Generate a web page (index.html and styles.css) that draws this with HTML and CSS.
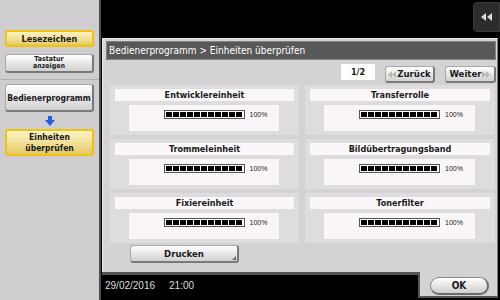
FILE: index.html
```html
<!DOCTYPE html>
<html lang="de">

<head>
    <meta charset="UTF-8">
    <meta name="viewport" content="width=device-width, initial-scale=1.0">
    <title>Einheiten überprüfen</title>
    <link rel="stylesheet" href="styles.css">
</head>

<body>
    <div class="screen">
        <aside class="sidebar">
            <div class="side-top">
                <button class="btn btn-yellow bookmark">Lesezeichen</button>
                <button class="btn btn-gray keyboard">Tastatur<br>anzeigen</button>
            </div>
            <div class="side-nav">
                <button class="btn btn-gray crumb">Bedienerprogramm</button>
                <svg class="down-arrow" width="10" height="10" viewBox="0 0 10 10">
                    <path d="M3 0 H7 V4 H10 L5 10 L0 4 H3 Z" fill="#1f5fe6" />
                </svg>
                <button class="btn btn-yellow crumb two-lines">Einheiten<br>überprüfen</button>
            </div>
        </aside>

        <main class="main">
            <div class="topbar">
                <button class="back">
                    <svg width="11" height="8" viewBox="0 0 11 8">
                        <path d="M5 0 L0 4 L5 8 Z M11 0 L6 4 L11 8 Z" fill="#dcdcdc" />
                    </svg>
                </button>
            </div>

            <section class="panel">
                <div class="panel-title">Bedienerprogramm &gt; Einheiten überprüfen</div>

                <div class="pager">
                    <div class="page-no">1/2</div>
                    <button class="btn btn-gray nav-btn">
                        <svg width="8" height="7" viewBox="0 0 8 7">
                            <path d="M4 0 L0 3.5 L4 7 Z M8 0 L4 3.5 L8 7 Z" fill="#b4b4b4" />
                        </svg>Zurück
                    </button>
                    <button class="btn btn-gray nav-btn">Weiter<svg width="8" height="7" viewBox="0 0 8 7">
                            <path d="M0 0 L4 3.5 L0 7 Z M4 0 L8 3.5 L4 7 Z" fill="#b4b4b4" />
                        </svg>
                    </button>
                </div>

                <div class="units">
                    <div class="unit">
                        <div class="unit-name">Entwicklereinheit</div>
                        <div class="unit-level"><span class="bar"></span><span class="pct">100%</span></div>
                    </div>
                    <div class="unit">
                        <div class="unit-name">Transferrolle</div>
                        <div class="unit-level"><span class="bar"></span><span class="pct">100%</span></div>
                    </div>
                    <div class="unit">
                        <div class="unit-name">Trommeleinheit</div>
                        <div class="unit-level"><span class="bar"></span><span class="pct">100%</span></div>
                    </div>
                    <div class="unit">
                        <div class="unit-name">Bildübertragungsband</div>
                        <div class="unit-level"><span class="bar"></span><span class="pct">100%</span></div>
                    </div>
                    <div class="unit">
                        <div class="unit-name">Fixiereinheit</div>
                        <div class="unit-level"><span class="bar"></span><span class="pct">100%</span></div>
                    </div>
                    <div class="unit">
                        <div class="unit-name">Tonerfilter</div>
                        <div class="unit-level"><span class="bar"></span><span class="pct">100%</span></div>
                    </div>
                </div>

                <div class="actions">
                    <button class="btn btn-gray print">Drucken</button>
                </div>
            </section>

            <footer class="footer">
                <div class="clock"><span>29/02/2016</span><span>21:00</span></div>
                <div class="ok-cell">
                    <button class="ok">OK</button>
                </div>
            </footer>
        </main>
    </div>
</body>

</html>
```

FILE: styles.css
```css
* {
    box-sizing: border-box;
}

body {
    margin: 0;
    background: #000;
    font-family: "DejaVu Sans", sans-serif;
    font-stretch: condensed;
    color: #1a1a1a;
}

.screen {
    display: flex;
    width: 500px;
    height: 300px;
    overflow: hidden;
}

button {
    font: inherit;
    font-stretch: condensed;
    color: inherit;
    padding: 0;
    cursor: pointer;
}

/* Botones generales */
.btn {
    display: flex;
    align-items: center;
    justify-content: center;
    text-align: center;
    border-radius: 3px;
    font-weight: bold;
    font-size: 9px;
    line-height: 10px;
}

.btn-gray {
    background: linear-gradient(#ffffff, #e4e3e4 60%, #d2d1d2);
    border: 1px solid #a8a8a8;
    border-right: 2px solid #7a7a7a;
    border-bottom: 2px solid #7a7a7a;
}

.btn-yellow {
    background: linear-gradient(#fbf3c4, #efdd8e 60%, #e2c966);
    border: 2px solid #f1c40a;
}

/* Barra lateral */
.sidebar {
    width: 101px;
    flex-shrink: 0;
    background: #cfcdd0;
    border-right: 2px solid #4e4e4e;
    display: flex;
    flex-direction: column;
}

.side-top {
    height: 80px;
    padding: 30px 5px 0;
    border-bottom: 1px solid #b2b0b3;
    display: flex;
    flex-direction: column;
    gap: 7px;
}

.bookmark {
    height: 17px;
    font-size: 9px;
}

.keyboard {
    height: 19px;
    font-size: 7px;
    line-height: 7px;
}

.side-nav {
    padding: 4px 5px 0;
    display: flex;
    flex-direction: column;
    align-items: center;
}

.crumb {
    width: 100%;
    height: 28px;
    font-size: 8.5px;
}

.two-lines {
    height: 27px;
    line-height: 11px;
}

.down-arrow {
    margin: 4px 0 3px;
}

/* Zona principal */
.main {
    flex: 1;
    display: flex;
    flex-direction: column;
}

.topbar {
    height: 38px;
    display: flex;
    justify-content: flex-end;
    padding-top: 2px;
}

.back {
    width: 27px;
    height: 30px;
    background: #2c2c2c;
    border: 1px solid #3a3a3a;
    border-radius: 4px 0 0 4px;
    display: flex;
    align-items: center;
    justify-content: center;
}

.panel {
    height: 234px;
    margin: 0 2px 0 1px;
    background: #d4d2d5;
    border: 1px solid #ebebeb;
    border-right-color: #7d7d7d;
    border-bottom: 0;
    padding: 2px 1px 0 3px;
}

.panel-title {
    height: 19px;
    background: #585858;
    border: 1px solid #828282;
    color: #fff;
    font-size: 10px;
    line-height: 17px;
    padding-left: 2px;
}

.pager {
    margin-top: 4px;
    height: 19px;
    display: flex;
    justify-content: flex-end;
    align-items: flex-start;
}

.page-no {
    width: 34px;
    height: 16px;
    background: #fff;
    text-align: center;
    font-size: 9px;
    font-weight: bold;
    line-height: 16px;
    margin-right: 10px;
}

.nav-btn {
    margin-top: 2px;
    height: 17px;
    width: 50px;
    gap: 1px;
    font-size: 9.5px;
}

.nav-btn + .nav-btn {
    margin-left: 10px;
    width: 51px;
}

.units {
    margin: 2px 0 0 4px;
    display: grid;
    grid-template-columns: 189px 190px;
    grid-auto-rows: 50px;
    gap: 4px 6px;
}

.unit {
    background: #dedcdf;
    border-radius: 2px;
    padding: 4px 5px 0;
}

.unit-name {
    height: 12px;
    background: #faf6fa;
    text-align: center;
    font-size: 9px;
    font-weight: bold;
    line-height: 12px;
}

.unit-level {
    margin: 4px 15px 0 14px;
    height: 26px;
    background: #f9f5f9;
    display: grid;
    grid-template-columns: 1fr auto 1fr;
    align-items: start;
    padding-top: 5px;
}

.bar {
    grid-column: 2;
    width: 81px;
    height: 9px;
    border: 1px solid #555;
    padding: 1px;
    background: repeating-linear-gradient(90deg, #000 0 6px, #fff 6px 7px) content-box, #fff;
}

.pct {
    font-family: "Liberation Sans", sans-serif;
    font-size: 7px;
    line-height: 9px;
    margin-left: 5px;
}

.actions {
    margin: 2px 0 0 24px;
}

.print {
    position: relative;
    width: 109px;
    height: 18px;
    font-size: 9.5px;
}

.print::after {
    content: "";
    position: absolute;
    right: 1px;
    bottom: 1px;
    border-left: 4px solid transparent;
    border-bottom: 4px solid #6a6a6a;
}

/* Pie con fecha y OK */
.footer {
    height: 28px;
    display: flex;
}

.clock {
    flex: 1;
    margin-left: 1px;
    border-top: 3px solid #555;
    color: #dedede;
    font-family: "Liberation Sans", sans-serif;
    font-size: 10px;
    display: flex;
    gap: 14px;
    padding: 5px 0 0 3px;
}

.ok-cell {
    width: 80px;
    height: 26px;
    margin-right: 2px;
    background: #d4d2d5;
    border-left: 2px solid #555;
    border-right: 1px solid #7d7d7d;
    border-bottom: 2px solid #555;
    padding: 2px 0 0 10px;
}

.ok {
    width: 59px;
    height: 18px;
    border-radius: 9px;
    background: linear-gradient(#ffffff, #e2e1e2 60%, #cfcecf);
    border: 1px solid #8a8a8a;
    border-right: 2px solid #6a6a6a;
    border-bottom: 2px solid #6a6a6a;
    font-size: 10px;
    font-weight: bold;
}
```
